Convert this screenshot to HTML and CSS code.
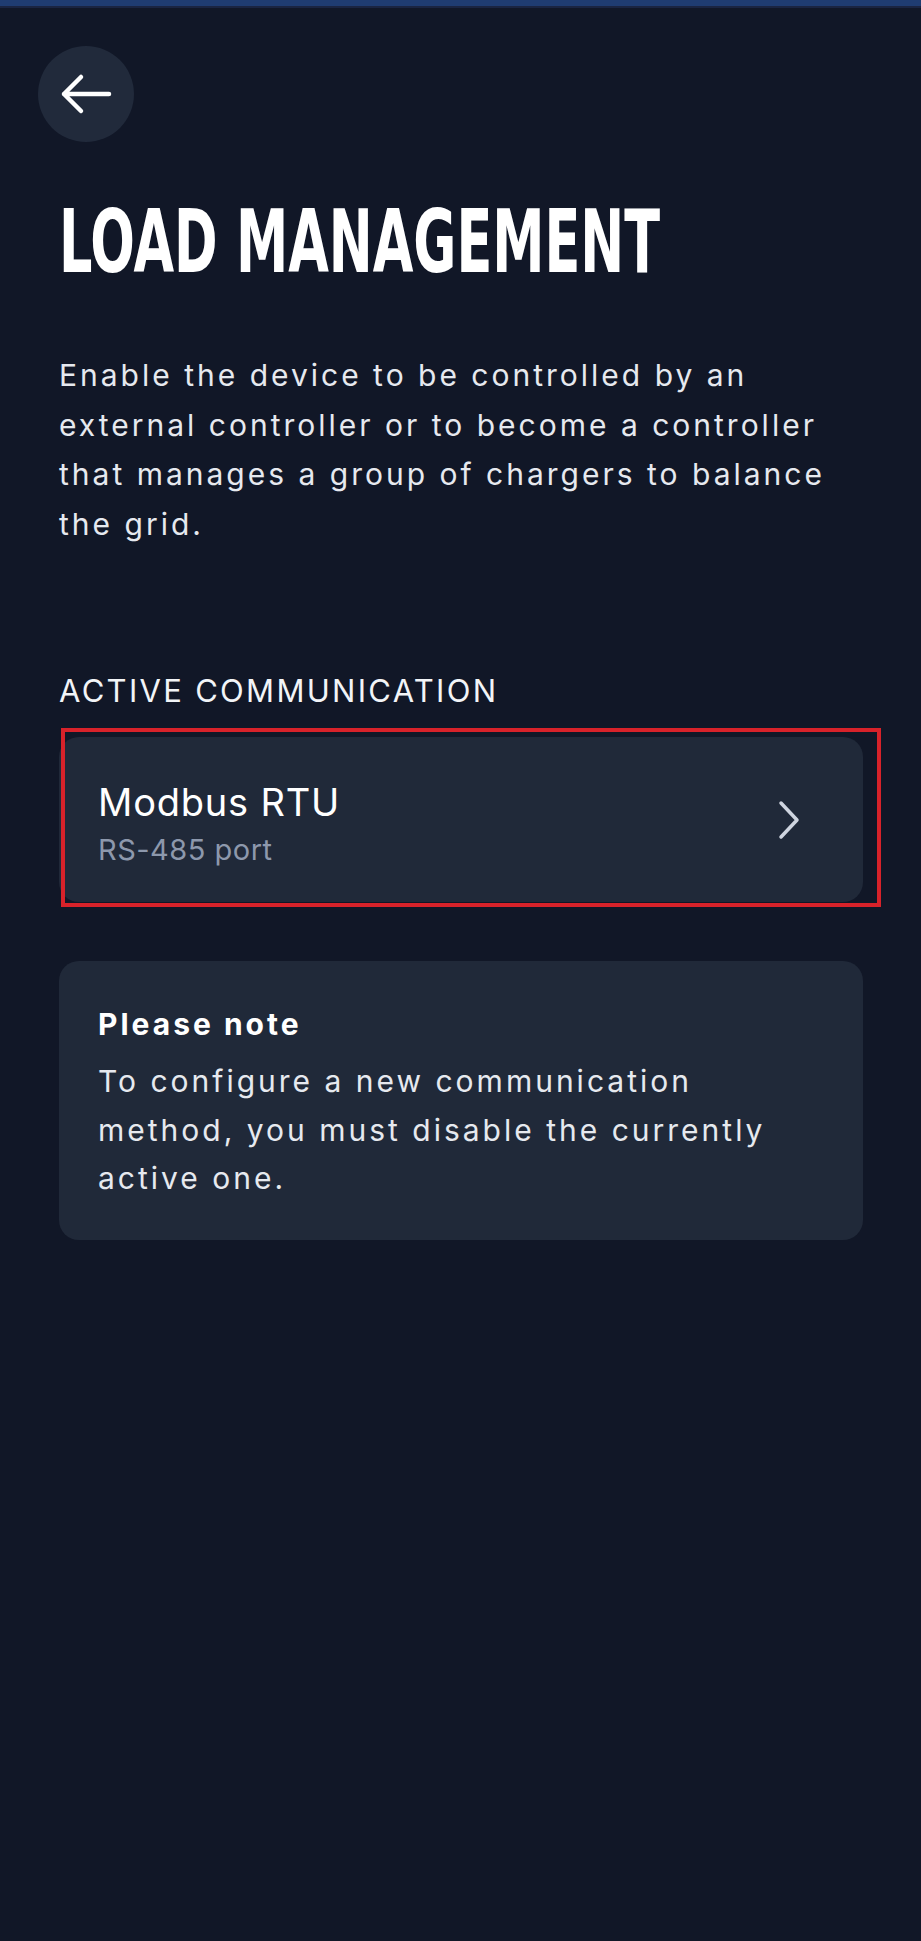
FILE: index.html
```html
<!DOCTYPE html>
<html lang="en">
<head>
<meta charset="utf-8">
<title>Load Management</title>
<link rel="stylesheet" href="styles.css">
</head>
<body>
<div class="statusbar"></div>
<div class="screen">
  <header class="header">
    <button class="back" aria-label="Back">
      <svg width="52" height="42" viewBox="0 0 52 42" fill="none" stroke="#ffffff" stroke-width="4.5" stroke-linecap="round" stroke-linejoin="round">
        <path d="M4 21 H49 M21 4 L4 21 L21 38"/>
      </svg>
    </button>
  </header>
  <main class="content">
    <h1 class="title"><span>LOAD MANAGEMENT</span></h1>
    <p class="intro">Enable the device to be controlled by an external controller or to become a controller that manages a group of chargers to balance the grid.</p>
    <h2 class="section-label">ACTIVE COMMUNICATION</h2>
    <div class="highlight">
      <a class="comm-card" href="#">
        <div class="comm-text">
          <div class="comm-name">Modbus RTU</div>
          <div class="comm-sub">RS-485 port</div>
        </div>
        <svg class="chev" width="24" height="40" viewBox="0 0 24 40" fill="none" stroke="#cfd5e0" stroke-width="3.5" stroke-linecap="round" stroke-linejoin="round">
          <path d="M4 3 L20 20 L4 37"/>
        </svg>
      </a>
    </div>
    <section class="note">
      <h3 class="note-title">Please note</h3>
      <p class="note-body">To configure a new communication method, you must disable the currently active one.</p>
    </section>
  </main>
</div>
</body>
</html>
```
FILE: styles.css
```css
* { box-sizing: border-box; }
html, body {
  margin: 0;
  padding: 0;
  background: #111727;
}
body {
  width: 921px;
  min-height: 1941px;
  font-family: "Inter", "Noto Sans", sans-serif;
  color: #e8ebf0;
}
.statusbar {
  height: 8px;
  background: #1f3c71;
  border-bottom: 2px solid #1a2441;
}
.screen {
  display: flex;
  flex-direction: column;
}
.header {
  display: flex;
  padding: 38px 0 0 38px;
}
.back {
  width: 96px;
  height: 96px;
  border-radius: 50%;
  border: none;
  background: #212a3b;
  display: flex;
  align-items: center;
  justify-content: center;
  padding: 0;
  cursor: pointer;
}
.content {
  display: flex;
  flex-direction: column;
  padding: 0 58px 0 59px;
}
.title {
  margin: 56px 0 0 0;
  font-family: "DejaVu Sans Condensed", "Liberation Sans", sans-serif;
  font-weight: 700;
  font-size: 88px;
  line-height: 88px;
  height: 88px;
  color: #ffffff;
  white-space: nowrap;
  letter-spacing: 0;
}
.title span {
  display: inline-block;
  transform: scaleX(0.663);
  transform-origin: 0 50%;
}
.intro {
  margin: 65px 0 0 0;
  font-size: 30px;
  line-height: 49.5px;
  letter-spacing: 3px;
  color: #e6e9ef;
}
.section-label {
  margin: 122px 0 0 0;
  font-size: 31px;
  line-height: 40px;
  font-weight: 400;
  letter-spacing: 2.3px;
  color: #f2f4f7;
}
.highlight {
  position: relative;
  margin-top: 26px;
}
.highlight::after {
  content: "";
  position: absolute;
  top: -9px;
  left: 2px;
  right: -18px;
  bottom: -5px;
  border: 4px solid #d8222a;
  pointer-events: none;
}
.comm-card {
  display: flex;
  align-items: center;
  justify-content: space-between;
  height: 165px;
  padding: 8px 62px 0 39px;
  background: #202939;
  border-radius: 20px;
  text-decoration: none;
}
.comm-text {
  display: flex;
  flex-direction: column;
}
.comm-name {
  font-size: 38px;
  line-height: 48px;
  color: #ffffff;
  letter-spacing: 0.8px;
}
.comm-sub {
  font-size: 29px;
  line-height: 40px;
  color: #8d98ac;
  letter-spacing: 0.5px;
  margin-top: 4px;
}
.chev {
  margin-top: -8px;
}
.note {
  margin-top: 59px;
  background: #202939;
  border-radius: 20px;
  padding: 43px 40px 37px 39px;
  min-height: 279px;
}
.note-title {
  margin: 0;
  font-size: 30px;
  line-height: 40px;
  font-weight: 700;
  letter-spacing: 3px;
  color: #ffffff;
}
.note-body {
  margin: 13px 0 0 0;
  font-size: 30px;
  line-height: 48.5px;
  letter-spacing: 3px;
  color: #e6e9ef;
}
```
